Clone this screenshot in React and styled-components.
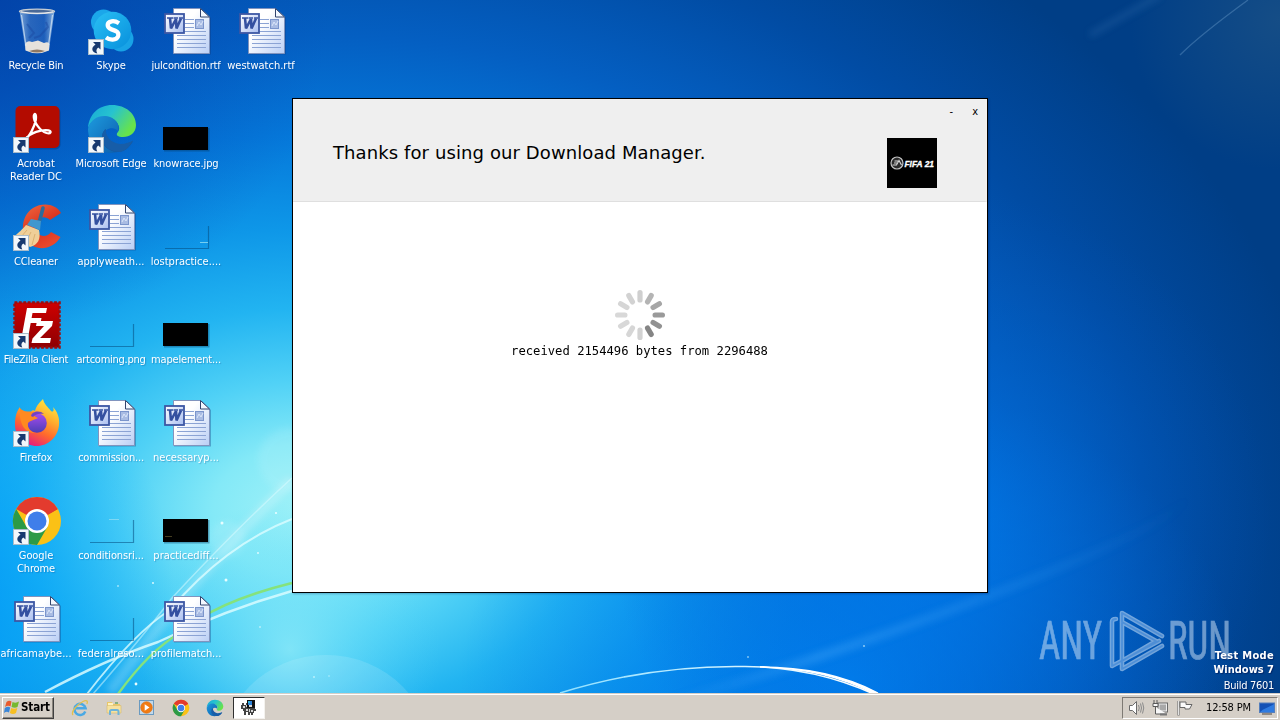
import React from "react";
import styled, { createGlobalStyle } from "styled-components";

const ui = `"DejaVu Sans Condensed", "DejaVu Sans", "Liberation Sans", sans-serif`;

const GlobalStyle = createGlobalStyle`
  * { box-sizing: border-box; }
  body { margin: 0; overflow: hidden; }
`;

const Screen = styled.div`
  position: relative;
  width: 1280px;
  height: 720px;
  overflow: hidden;
  display: flex;
  flex-direction: column;
  font-family: ${ui};
  font-stretch: condensed;
`;

const WallpaperSvg = styled.svg`
  position: absolute;
  inset: 0;
  z-index: 0;
`;

const Desktop = styled.main`
  position: relative;
  z-index: 1;
  flex: 1;
`;

const IconGrid = styled.div`
  display: grid;
  grid-auto-flow: column;
  grid-template-rows: repeat(7, 98px);
  grid-auto-columns: 75px;
  width: max-content;
  margin-left: -1px;
  padding-top: 7px;
`;

const Shortcut = styled.div`
  display: flex;
  flex-direction: column;
  align-items: center;
  svg { margin-left: 1px; flex: none; overflow: visible; }
`;

const Label = styled.span`
  margin-top: 4px;
  margin-left: -1px;
  width: 78px;
  text-align: center;
  white-space: pre;
  color: #fff;
  font-size: 11px;
  line-height: 13px;
  letter-spacing: ${(p) => p.$spacing ?? 0}px;
  text-shadow: 1px 1px 1px rgba(0, 60, 130, 0.3);
`;

const Window = styled.section`
  position: absolute;
  left: 292px;
  top: 98px;
  width: 696px;
  height: 495px;
  border: 1px solid #000;
  background: #fff;
  display: flex;
  flex-direction: column;
  box-shadow: 1px 1px 2px rgba(0, 0, 60, 0.25);
`;

const WindowHeader = styled.header`
  height: 103px;
  background: #efefef;
  border-bottom: 1px solid #dfdfdf;
  border-right: 2px solid #f3f0ed;
  display: flex;
  flex-direction: column;
`;

const Controls = styled.div`
  display: flex;
  justify-content: flex-end;
  gap: 19px;
  height: 27px;
  padding: 6px 7px 0 0;
  font-size: 11px;
  line-height: 13px;
  color: #000;
`;

const HeaderRow = styled.div`
  display: flex;
  justify-content: space-between;
  padding: 12px 48px 0 40px;
`;

const Title = styled.h1`
  margin: 3px 0 0;
  font: 400 18px/24px "DejaVu Sans", Verdana, sans-serif;
  font-stretch: normal;
  letter-spacing: 0.1px;
  color: #000;
  white-space: nowrap;
`;

const WindowBody = styled.div`
  flex: 1;
  display: flex;
  flex-direction: column;
  align-items: center;
  padding-top: 88px;
`;

const Status = styled.p`
  margin: 3px 1px 0 0;
  font: 12.2px/16px "DejaVu Sans Mono", monospace;
  color: #000;
  white-space: nowrap;
`;

const WatermarkSvg = styled.svg`
  position: absolute;
  left: 1034px;
  top: 606px;
`;

const BuildInfo = styled.div`
  position: absolute;
  right: 6px;
  bottom: 0;
  text-align: right;
  color: #fff;
  font-size: 11px;
  line-height: 14px;
  text-shadow: 1px 1px 1px rgba(0, 20, 80, 0.6);
  p { margin: 0; }
`;

const Strong = styled.p`
  font-weight: 700;
  letter-spacing: ${(p) => p.$spacing ?? 0}px;
`;

const Build = styled.p`
  padding-top: 2px;
  letter-spacing: -0.3px;
`;

const Taskbar = styled.footer`
  position: relative;
  z-index: 1;
  height: 28px;
  background: #d5cfc7;
  border-top: 1px solid #d5cfc7;
  box-shadow: inset 0 1px #fff;
  display: flex;
  align-items: flex-start;
  padding: 3px 2px 0;
`;

const StartButton = styled.div`
  width: 52px;
  height: 22px;
  display: flex;
  align-items: center;
  gap: 1px;
  padding-left: 1px;
  padding-bottom: 2px;
  border: 1px solid;
  border-color: #fff #404040 #404040 #fff;
  box-shadow: inset -1px -1px #8a857d;
  font: 700 11.5px/18px ${ui};
  font-stretch: condensed;
  letter-spacing: -0.1px;
  color: #000;
`;

const QuickLaunch = styled.nav`
  display: flex;
  align-items: center;
  gap: 15.7px;
  height: 22px;
  margin-left: 17px;
  svg { display: block; }
`;

const ActiveTask = styled.div`
  width: 32px;
  height: 22px;
  margin-left: 9px;
  display: flex;
  align-items: center;
  justify-content: center;
  background: #fff;
  border: 1px solid;
  border-color: #303030 #f4f2ee #f4f2ee #303030;
`;

const Tray = styled.div`
  margin-left: auto;
  width: 156px;
  height: 22px;
  display: flex;
  align-items: center;
  padding: 0 0 1px 5px;
  border: 1px solid;
  border-color: #7e7a74 #fff #fff #7e7a74;
  svg { display: block; flex: none; }
`;

const TrayIcons = styled.div`
  display: flex;
  gap: 6px;
  width: 78px;
`;

const Clock = styled.time`
  width: 53px;
  font-size: 11px;
  letter-spacing: -0.15px;
  white-space: nowrap;
  color: #000;
`;

/* ---------- wallpaper ---------- */

const Wallpaper = () => (
  <WallpaperSvg width="1280" height="720" viewBox="0 0 1280 720">
    <defs>
      <radialGradient id="sky" gradientUnits="userSpaceOnUse" cx="0" cy="0" r="720" gradientTransform="translate(305 510) scale(1.42 1)">
        <stop offset="0" stopColor="#a0f2f8" />
        <stop offset=".09" stopColor="#84e9f7" />
        <stop offset=".18" stopColor="#50d1f6" />
        <stop offset=".28" stopColor="#22b4f1" />
        <stop offset=".39" stopColor="#0e97e8" />
        <stop offset=".52" stopColor="#0578da" />
        <stop offset=".66" stopColor="#045fc2" />
        <stop offset=".82" stopColor="#014ca4" />
        <stop offset="1" stopColor="#003e86" />
      </radialGradient>
      <radialGradient id="low" gradientUnits="userSpaceOnUse" cx="0" cy="0" r="300" gradientTransform="translate(850 680) scale(1.3 1)">
        <stop offset="0" stopColor="#008cff" stopOpacity=".8" />
        <stop offset="1" stopColor="#0078f0" stopOpacity="0" />
      </radialGradient>
      <radialGradient id="right" gradientUnits="userSpaceOnUse" cx="0" cy="0" r="330" gradientTransform="translate(940 520)">
        <stop offset="0" stopColor="#007cee" stopOpacity=".7" />
        <stop offset=".5" stopColor="#0068d6" stopOpacity=".4" />
        <stop offset="1" stopColor="#0058c0" stopOpacity="0" />
      </radialGradient>
      <radialGradient id="left" gradientUnits="userSpaceOnUse" cx="0" cy="0" r="260" gradientTransform="translate(-60 590) scale(.9 1)">
        <stop offset="0" stopColor="#0094f8" stopOpacity=".8" />
        <stop offset=".35" stopColor="#00a0fa" stopOpacity=".6" />
        <stop offset="1" stopColor="#00a8fa" stopOpacity="0" />
      </radialGradient>
      <radialGradient id="teal" gradientUnits="userSpaceOnUse" cx="290" cy="650" r="150">
        <stop offset="0" stopColor="#96eef8" stopOpacity=".7" />
        <stop offset="1" stopColor="#48d4fa" stopOpacity="0" />
      </radialGradient>
      <radialGradient id="corner" gradientUnits="userSpaceOnUse" cx="0" cy="0" r="330">
        <stop offset="0" stopColor="#023fa8" stopOpacity=".75" />
        <stop offset="1" stopColor="#0348b4" stopOpacity="0" />
      </radialGradient>
      <radialGradient id="haze" gradientUnits="userSpaceOnUse" cx="1280" cy="20" r="150">
        <stop offset="0" stopColor="#2a5c86" stopOpacity=".5" />
        <stop offset="1" stopColor="#2a5c86" stopOpacity="0" />
      </radialGradient>
      <linearGradient id="arc" gradientUnits="userSpaceOnUse" x1="560" y1="0" x2="880" y2="0">
        <stop offset="0" stopColor="#8fe0ff" />
        <stop offset=".6" stopColor="#d8f4ff" />
        <stop offset="1" stopColor="#fff" />
      </linearGradient>
      <linearGradient id="beam" gradientUnits="userSpaceOnUse" x1="660" y1="0" x2="1190" y2="0">
        <stop offset="0" stopColor="#5ab6ff" stopOpacity="0" />
        <stop offset=".3" stopColor="#5ab6ff" stopOpacity=".3" />
        <stop offset="1" stopColor="#5ab6ff" stopOpacity="0" />
      </linearGradient>
      <filter id="soft1" x="-10%" y="-10%" width="120%" height="120%"><feGaussianBlur stdDeviation=".7" /></filter>
      <filter id="soft4" x="-20%" y="-20%" width="140%" height="140%"><feGaussianBlur stdDeviation="3.500" /></filter>
    </defs>
    <rect width="1280" height="720" fill="url(#sky)" />
    <rect width="1280" height="720" fill="url(#low)" />
    <rect width="1280" height="720" fill="url(#right)" />
    <rect width="1280" height="720" fill="url(#left)" />
    <rect width="1280" height="720" fill="url(#teal)" />
    <rect width="400" height="400" fill="url(#corner)" />
    <rect x="1100" width="180" height="200" fill="url(#haze)" />
    <g fill="#fff">
      <circle cx="326" cy="764" r="109" opacity=".12" filter="url(#soft1)" />
      <circle cx="227" cy="539" r="18" opacity=".12" filter="url(#soft4)" />
      <circle cx="290" cy="460" r="32" opacity=".1" filter="url(#soft4)" />
    </g>
    <g fill="none" filter="url(#soft4)">
      <path d="M650 707Q800 668 988 596T1190 495" stroke="url(#beam)" strokeWidth="9" />
      <path d="M1090 35L1160 -5" stroke="#5f9ad0" strokeWidth="6" opacity=".18" />
      <path d="M110 692Q190 580 292 480" stroke="#fff" strokeWidth="10" opacity=".22" />
    </g>
    <path d="M1180 55Q1200 35 1248 0" fill="none" stroke="#7aaad6" strokeWidth="1.400" opacity=".35" filter="url(#soft1)" />
    <g fill="none" filter="url(#soft1)">
      <path d="M45 692Q105 660 158 642Q225 610 292 591" stroke="#d8fbff" strokeWidth="2.400" opacity=".85" />
      <path d="M87 694Q135 632 170 610Q225 545 292 519" stroke="#dcfcff" strokeWidth="1.900" opacity=".8" />
      <path d="M93 694Q140 640 172 598Q235 530 292 478" stroke="#dcfcff" strokeWidth="1.600" opacity=".5" />
      <path d="M118 694Q150 650 180 633Q215 602 292 583" stroke="#85e27c" strokeWidth="2.400" />
      <path d="M560 693Q650 665 745 666.500Q815 667 876 695" stroke="url(#arc)" strokeWidth="1.500" />
      <path d="M760 667Q825 668 873 693L878 693Q828 667 760 667Z" fill="#fff" stroke="#fff" strokeWidth="1.400" />
    </g>
    <g fill="#e8fdff">
      <circle cx="222" cy="523" r="1.500" /><circle cx="276" cy="513" r="1.100" /><circle cx="258" cy="553" r=".9" />
      <circle cx="226" cy="580" r="1.500" /><circle cx="153" cy="583" r=".9" /><circle cx="118" cy="586" r=".8" />
      <circle cx="136" cy="684" r="1.400" /><circle cx="260" cy="627" r=".8" /><circle cx="314" cy="677" r="1" opacity=".6" />
      <circle cx="329" cy="676" r=".8" opacity=".6" /><circle cx="748" cy="657" r=".9" opacity=".6" /><circle cx="864" cy="646" r="1" opacity=".6" />
    </g>
  </WallpaperSvg>
);

/* ---------- desktop icons, 48x48 ---------- */

const Icon48 = ({ children }) => <svg width="48" height="48" viewBox="0 0 48 48">{children}</svg>;

const Arrow = () => (
  <g>
    <rect x=".5" y="32.500" width="15" height="15" fill="#f2f7fb" stroke="#a9bccb" strokeWidth="1" />
    <path d="M5 35H12.500V42.500L10.300 40.400C8 42 8 44 9.300 46.500C4.200 45.500 2 41 7.500 37.400Z" fill="#17396f" />
  </g>
);

const RecycleIcon = () => (
  <Icon48>
    <defs>
      <linearGradient id="bin" x1="0" x2="1"><stop offset="0" stopColor="#b5d2ee" stopOpacity=".7" /><stop offset=".3" stopColor="#4a80c8" stopOpacity=".55" /><stop offset=".7" stopColor="#3470c4" stopOpacity=".55" /><stop offset="1" stopColor="#b9d7f0" stopOpacity=".8" /></linearGradient>
    </defs>
    <path d="M6.500 4L12.500 43Q24 49 36 43L41.500 4Z" fill="url(#bin)" />
    <path d="M12 37Q14 33 19 35L25 33.500L31 36Q35.500 34 36.500 37L36 43.500Q24 49 12.500 43.500Z" fill="#e6e2dc" />
    <path d="M16 44Q24 41 32 44Q24 47 16 44Z" fill="#8e7864" />
    <path d="M14 17L21 26L16 31M33 15L35 20L27 29L21 31" stroke="#1a48a0" strokeWidth="2" fill="none" opacity=".45" />
    <path d="M8.500 8L13 39M39.500 8L35.500 38" stroke="#dcebf8" strokeWidth="1.200" opacity=".7" />
    <ellipse cx="24" cy="4.300" rx="17.500" ry="2.200" fill="#4a6a98" stroke="#c5ccd3" strokeWidth="1.400" />
    <path d="M8 4.800Q24 8 40 4.800" stroke="#eef0f2" fill="none" />
  </Icon48>
);

const SkypeIcon = () => (
  <Icon48>
    <defs><linearGradient id="sk" x1="0" x2="1" y2="1"><stop stopColor="#2ac0f4" /><stop offset="1" stopColor="#078fdc" /></linearGradient></defs>
    <circle cx="15.500" cy="15" r="12.500" fill="#1ba7ea" />
    <circle cx="33" cy="32" r="12.500" fill="#18a3e6" />
    <circle cx="24.500" cy="23.500" r="18.800" fill="url(#sk)" />
    <path d="M31 16.200Q27 13.600 23.600 14.300C18.300 15.300 18.500 20.700 23.500 22.400C28.500 24 31.500 25 30 29.500C28.500 33.500 21.500 33.200 18 30.600" fill="none" stroke="#fff" strokeWidth="4.300" />
    <Arrow />
  </Icon48>
);

const WordIcon = () => (
  <Icon48>
    <defs>
      <linearGradient id="pg" x1="0" y1="0" x2="1" y2="1"><stop offset=".35" stopColor="#fff" /><stop offset="1" stopColor="#b9cef5" /></linearGradient>
      <linearGradient id="wb" x1="0" y1="0" x2="1" y2="1"><stop stopColor="#fff" /><stop offset="1" stopColor="#a9bef0" /></linearGradient>
    </defs>
    <path d="M11 2H39L48 11V47.500H11Z" fill="#123a7b" opacity=".35" />
    <path d="M10.500 1.500H37.500L46.500 10V46.500H10.500Z" fill="url(#pg)" stroke="#8194be" />
    <path d="M37.500 1.500V10H46.500Z" fill="#f3f8ff" stroke="#33446c" />
    <path d="M22 12.500H31M22 16.500H31M22 20.500H31M14 24.500H43M14 28.500H43M14 32.500H43M14 36.500H43M14 40.500H43" stroke="#8ba3d4" />
    <rect x="32.500" y="12.500" width="8" height="9" fill="#a9bce3" stroke="#7b95cc" />
    <path d="M34 19L36 15L38 18L40 14" stroke="#dbe6fa" fill="none" />
    <rect x="2" y="7" width="19" height="19" fill="url(#wb)" stroke="#3c57a4" strokeWidth="1.800" />
    <path d="M4 11H10M10.500 11H15M16 11H20" stroke="#3450a0" strokeWidth="1.500" />
    <path d="M7 11L8 21.500L13 12L13.500 21.500L18 11.500" fill="none" stroke="#3450a0" strokeWidth="2.600" strokeLinejoin="bevel" />
  </Icon48>
);

const AcrobatIcon = () => (
  <Icon48>
    <rect x="3.500" y="2.500" width="44" height="42" rx="5" fill="#002a60" opacity=".35" />
    <rect x="2.500" y="1" width="44" height="42" rx="5" fill="#b30b00" />
    <path d="M12 34.500C17 31.500 21.500 21 22.800 15C23.700 8.500 21.300 7.500 20.800 11C20.400 16.500 27 26 33.500 28C38 29.200 39 26 35.500 25.300C29 24.300 17 27.500 12 34.500Z" fill="none" stroke="#fff" strokeWidth="2.300" />
    <Arrow />
  </Icon48>
);

const EdgeShape = ({ id }) => (
  <g>
    <defs>
      <linearGradient id={id + "a"} x1="0" y1="0" x2="1" y2=".5"><stop stopColor="#16a8d8" /><stop offset=".5" stopColor="#27c3cf" /><stop offset="1" stopColor="#67e34c" /></linearGradient>
      <linearGradient id={id + "b"} x1="0" y1="0" x2="1" y2="1"><stop stopColor="#1d9ade" /><stop offset="1" stopColor="#0c5dac" /></linearGradient>
    </defs>
    <path d="M0 23C1 9 11 0 24 0C38 0 48 9 48 20C48 28 42 32 35 32C30 32 27 30 30 27C33 23 30 17 25 14C16 10 4 13 0 23Z" fill={`url(#${id}a)`} />
    <path d="M0 24C2 15 9 11 16 11C26 11 33 19 30 26C26 21 16 23 15 31C14 39 21 46 31 46.500C15 52 0 41 0 24Z" fill={`url(#${id}b)`} />
    <path d="M18 24C13 33 20 43 31 42C37 41.500 42 38 45 36C42 42 37 46 31 47C20 47 13 40 14 31C14.500 28 16 25 18 24Z" fill="#15589f" />
    <path d="M18 24C17 30 22 38 32 39C38 39 42 37 45 35.500C41 43 36 47 31 47C20 46 13 40 14 31C14.500 28 16 25 18 24Z" fill="#175da8" />
  </g>
);

const EdgeIcon = () => <Icon48><EdgeShape id="ed" /><Arrow /></Icon48>;

const CCleanerIcon = () => (
  <Icon48>
    <defs><linearGradient id="cc" x1="0" y1="0" x2=".5" y2="1"><stop stopColor="#f06a40" /><stop offset=".6" stopColor="#d8301e" /><stop offset="1" stopColor="#e8472b" /></linearGradient></defs>
    <path d="M48 10C43 1 30 -1 20 5C6 14 7 36 20 43C29 48 42 44 47.500 34L38 29C34 35 25 34 22.500 27C20 17 30 10 37 17Z" fill="url(#cc)" />
    <path d="M30 5L26 20" stroke="#2c6c9c" strokeWidth="3.600" strokeLinecap="round" />
    <path d="M18 16L28 18L27 27L14 22Z" fill="#3f97cf" />
    <path d="M13 22L26 27C28 36 25 42 17 44L2 33C6 29 9 27 13 22Z" fill="#f0cf98" />
    <path d="M14 27L8 34M18 29L13 39M22 31L19 42" stroke="#d9ad6c" strokeWidth=".9" />
    <Arrow />
  </Icon48>
);

const FileZillaIcon = () => (
  <Icon48>
    <defs><linearGradient id="fz" x2="0" y2="1"><stop stopColor="#cf0000" /><stop offset="1" stopColor="#8d0003" /></linearGradient></defs>
    <rect x="1.500" y="1.500" width="45" height="45" fill="url(#fz)" stroke="#9d0b0d" strokeWidth="2.500" strokeDasharray="2.800 1.600" />
    <path d="M14 7H34L33 12H19.500L18.600 17H28.500L27.500 22H17.700L15.500 34H9Z" fill="#fff" />
    <path d="M24 20H40L39 25L27 37H38L37 42H18.500L19.500 37.500L31 25H23Z" fill="#fff" />
    <Arrow />
  </Icon48>
);

const FirefoxIcon = () => (
  <Icon48>
    <defs>
      <linearGradient id="ff" x1=".8" y1="0" x2=".3" y2="1"><stop stopColor="#fff044" /><stop offset=".35" stopColor="#ffb02e" /><stop offset=".65" stopColor="#ff6a2c" /><stop offset="1" stopColor="#e31587" /></linearGradient>
      <linearGradient id="fp" x2="0" y2="1"><stop stopColor="#a84bf0" /><stop offset="1" stopColor="#4b3fb5" /></linearGradient>
    </defs>
    <path d="M7 8C7 12 8 13 9 14C12 13 15 13 17 14C18 12 20 10 22 12C23 7 27 3 30 0C31 5 35 8 38 12C41 14 41 10 40 8C44 12 47 19 46 26C45 38 35 47 24 47C12 47 2 38 2 26C2 19 3 13 7 8Z" fill="url(#ff)" />
    <circle cx="24" cy="24" r="9.800" fill="url(#fp)" />
    <path d="M7 9C10 14 19 12 22 13C20 15 20 17 25 19C21 21 18 21 15 24C14 28 17 33 22 34C11 34 6 24 7 9Z" fill="#ff8a20" />
    <path d="M18 17C19 12 27 11 31 15C25 14 22 16 20 18Z" fill="#7143c4" />
    <Arrow />
  </Icon48>
);

const ChromeShape = () => (
  <g>
    <circle cx="24" cy="24" r="24" fill="#fbc116" />
    <path d="M24 24L3.200 12A24 24 0 0 1 44.800 12Z" fill="#e33b2e" />
    <path d="M24 12H44.800L24 24Z" fill="#e33b2e" />
    <path d="M3.200 12A24 24 0 0 0 24 48L34.400 30L24 24L13.600 30Z" fill="#2c9a47" />
    <circle cx="24" cy="24" r="12" fill="#fff" />
    <circle cx="24" cy="24" r="9.500" fill="#3f7eea" />
  </g>
);

const ChromeIcon = () => <Icon48><ChromeShape /><Arrow /></Icon48>;

const ThumbIcon = ({ dark, mark }) => (
  <Icon48>
    {dark ? (
      <g><rect x="1" y="23" width="45.500" height="23.500" fill="#063b66" opacity=".4" /><rect y="22" width="45" height="23" fill="#000" /></g>
    ) : (
      <path d="M2 45.500H45.500V23" fill="none" stroke="#064d80" strokeWidth="1.200" opacity=".55" />
    )}
    {mark && <path d={mark} stroke={dark ? "#554c28" : "#8edcf2"} strokeWidth="1" fill="none" opacity=".8" />}
  </Icon48>
);

const items = [
  ["Recycle Bin", <RecycleIcon />, -0.2],
  ["Acrobat\nReader DC", <AcrobatIcon />, -0.1],
  ["CCleaner", <CCleanerIcon />, -0.15],
  ["FileZilla Client", <FileZillaIcon />, -0.32],
  ["Firefox", <FirefoxIcon />],
  ["Google\nChrome", <ChromeIcon />, -0.1],
  ["africamaybe...", <WordIcon />],
  ["Skype", <SkypeIcon />, -0.1],
  ["Microsoft Edge", <EdgeIcon />, -0.15],
  ["applyweath...", <WordIcon />],
  ["artcoming.png", <ThumbIcon />, -0.25],
  ["commission...", <WordIcon />, -0.2],
  ["conditionsri...", <ThumbIcon mark="M21 22.500H31" />, -0.1],
  ["federalreso...", <ThumbIcon />, 0.1],
  ["julcondition.rtf", <WordIcon />, -0.18],
  ["knowrace.jpg", <ThumbIcon dark />, -0.1],
  ["lostpractice....", <ThumbIcon mark="M37 39.500H45" />],
  ["mapelement...", <ThumbIcon dark />, -0.18],
  ["necessaryp...", <WordIcon />],
  ["practicediff...", <ThumbIcon dark mark="M2 39.500H9" />],
  ["profilematch...", <WordIcon />, -0.1],
  ["westwatch.rtf", <WordIcon />],
];

/* ---------- window artwork ---------- */

const FifaLogo = () => (
  <svg width="50" height="50" viewBox="0 0 50 50">
    <rect width="50" height="50" fill="#000" />
    <circle cx="10" cy="25" r="6" fill="#2c2c2c" stroke="#c4c4c4" strokeWidth="1.200" />
    <path d="M5.500 27H9.500L12 22.500L14.500 27M7 25H10M7.500 23H11" stroke="#d8d8d8" strokeWidth="1.100" fill="none" />
    <text x="17.500" y="28.500" textLength="29.500" lengthAdjust="spacingAndGlyphs" fontFamily="Liberation Sans, sans-serif" fontWeight="700" fontStyle="italic" fontSize="9.500" fill="#fff" stroke="#fff" strokeWidth=".35">FIFA 21</text>
  </svg>
);

const spokes = ["#cfcfcf", "#b4b4b4", "#a6a6a6", "#9a9a9a", "#929292", "#858585", "#d2d2d2", "#d6d6d6", "#d8d8d8", "#d8d8d8", "#d6d6d6", "#d2d2d2"];

const Spinner = () => (
  <svg width="50" height="50" viewBox="0 0 50 50">
    {spokes.map((c, i) => (
      <rect key={i} x="22.400" y="0" width="5.200" height="12.500" rx="2.600" fill={c} transform={`rotate(${i * 30} 25 25)`} />
    ))}
  </svg>
);

const Watermark = () => (
  <WatermarkSvg width="202" height="72" viewBox="1034 606 202 72">
    <g opacity=".52" fill="#cfe2f6" stroke="#cfe2f6" strokeWidth=".7" fontFamily="Roboto, Liberation Sans, sans-serif" fontWeight="400" fontSize="53">
      <text x="1039" y="659" textLength="63" lengthAdjust="spacingAndGlyphs">ANY</text>
      <text x="1168" y="659" textLength="63" lengthAdjust="spacingAndGlyphs">RUN</text>
    </g>
    <g fill="none" strokeLinejoin="round" strokeLinecap="round" opacity=".62">
      <path d="M1116 619Q1112 619 1112 622V666L1159 641M1122 640V613L1162 636M1122 622L1156 641L1122 661V640M1122 662V669L1162 646" stroke="#b9d5f2" strokeWidth="4.600" />
      <path d="M1116 619Q1112 619 1112 622V666L1159 641M1122 640V613L1162 636M1122 622L1156 641L1122 661V640M1122 662V669L1162 646" stroke="#7fb2ea" strokeWidth="1.800" />
    </g>
  </WatermarkSvg>
);

/* ---------- taskbar icons ---------- */

const StartFlag = () => (
  <svg width="16" height="16" viewBox="0 0 16 16">
    <path d="M2.500 3Q5 1 7.500 2.500L6.500 7.500Q4 6 1 8Z" fill="#e85a2c" />
    <path d="M8.500 3Q12 4.500 15 2.500L13.500 8Q11 9.500 7.500 8Z" fill="#76b82e" />
    <path d="M.8 9Q4 7 6.200 8.500L5 13.500Q2.500 12 0 14Z" fill="#3a86d8" />
    <path d="M7.200 9Q10 10.500 13.300 9L12 14Q9 16 5.900 14Z" fill="#f7bf22" />
  </svg>
);

const IEIcon = () => (
  <svg width="18" height="18" viewBox="0 0 18 18">
    <path d="M14.300 12.500A5.600 5.600 0 1 1 14.600 9.300H5" fill="none" stroke="#4aa9e4" strokeWidth="2.500" />
    <path d="M2 16C-.5 13 6 5.500 12 2.500C15 1 17.500 1.500 15.800 5" fill="none" stroke="#e3c04c" strokeWidth="1.300" />
  </svg>
);

const ExplorerIcon = () => (
  <svg width="18" height="18" viewBox="0 0 18 18">
    <path d="M2 3H7L8 5H15V14H2Z" fill="#e9c767" />
    <path d="M3 4H8V12H3Z" fill="#fff2bd" />
    <path d="M2 6.500H16V14H2Z" fill="#f6e2a0" stroke="#d6bb6c" strokeWidth=".6" />
    <path d="M5 16V12.500Q5 11 6.500 11H12Q13.500 11 13.500 12.500V16" fill="none" stroke="#6fb4d8" strokeWidth="2" />
    <path d="M10 4H13" stroke="#4f9c52" strokeWidth="1.200" />
  </svg>
);

const MediaIcon = () => (
  <svg width="18" height="18" viewBox="0 0 18 18">
    <rect x="1.500" y="1.500" width="14" height="14" fill="#c3d9ea" stroke="#6a9ac0" />
    <circle cx="8.500" cy="8.500" r="5.800" fill="#f17b13" stroke="#d96a0b" strokeWidth=".6" />
    <path d="M6.700 5.200L11.500 8.500L6.700 11.800Z" fill="#fff" />
  </svg>
);

const InstallerIcon = () => (
  <svg width="18" height="18" viewBox="0 0 18 18" shapeRendering="crispEdges">
    <path d="M7 1H15V9H7Z" fill="#111" />
    <path d="M8 2H12V6H8Z" fill="#2b7fd6" />
    <path d="M8 2H10V4H8Z" fill="#35b8e0" />
    <path d="M2 4H4V6H6V4H7V9H15V10H16V12H14V14H13V16H11V14H10V16H8V13H6V16H4V12H3V10H1V6H2Z" fill="#444" />
    <path d="M3 7H5V9H3ZM6 6H7V8H6ZM6 10H8V12H6ZM9 10H10V13H9ZM11 11H13V13H11ZM9 6H12V8H9Z" fill="#d8d8d8" />
  </svg>
);

const SpeakerIcon = () => (
  <svg width="18" height="18" viewBox="0 0 18 18">
    <path d="M1.500 6.500H4.500L8.500 2.500V15.500L4.500 11.500H1.500Z" fill="#fff" stroke="#6b6b6b" />
    <path d="M10.500 6Q12 9 10.500 12M12.500 4.500Q14.500 9 12.500 13.500M14.500 3.500Q17 9 14.500 14.500" fill="none" stroke="#8a8a8a" />
  </svg>
);

const NetworkIcon = () => (
  <svg width="18" height="18" viewBox="0 0 18 18">
    <rect x="6" y="4" width="9.500" height="9" fill="#eee" stroke="#6a6a6a" />
    <rect x="7.500" y="5.500" width="6.500" height="6" fill="#a8a8a8" />
    <path d="M2 1V4M5 1V4M1 4.500H6V7.500H1ZM3.500 8V15H15" fill="#f8f8f8" stroke="#5a5a5a" />
    <path d="M8 15.500H15" stroke="#777" strokeWidth="2" />
  </svg>
);

const FlagIcon = () => (
  <svg width="18" height="18" viewBox="0 0 18 18">
    <path d="M2.500 2V16.500" stroke="#777" strokeWidth="2.200" />
    <path d="M2.500 2V16" stroke="#fff" strokeWidth=".8" />
    <path d="M4 3H10V5.500H16L13.500 10H9V8.500H4Z" fill="#fafafa" stroke="#666" />
  </svg>
);

const ShowDesktopIcon = () => (
  <svg width="16" height="16" viewBox="0 0 16 16">
    <rect x=".5" y="3" width="15" height="9.500" fill="#1451b5" stroke="#547ebc" />
    <path d="M1 12C5 8 11 7 15 4V12Z" fill="#2f7be0" />
    <path d="M3 14H13" stroke="#78716a" strokeWidth="1.500" />
  </svg>
);

export default function App() {
  return (
    <Screen>
      <GlobalStyle />
      <Wallpaper />
      <Desktop>
        <IconGrid>
          {items.map(([name, icon, spacing]) => (
            <Shortcut key={name}>
              {icon}
              <Label $spacing={spacing}>{name}</Label>
            </Shortcut>
          ))}
        </IconGrid>
        <Window>
          <WindowHeader>
            <Controls><span>-</span><span>x</span></Controls>
            <HeaderRow>
              <Title>Thanks for using our Download Manager.</Title>
              <FifaLogo />
            </HeaderRow>
          </WindowHeader>
          <WindowBody>
            <Spinner />
            <Status>received 2154496 bytes from 2296488</Status>
          </WindowBody>
        </Window>
        <Watermark />
        <BuildInfo>
          <Strong $spacing={0.3}>Test Mode</Strong>
          <Strong>Windows 7</Strong>
          <Build>Build 7601</Build>
        </BuildInfo>
      </Desktop>
      <Taskbar>
        <StartButton><StartFlag />Start</StartButton>
        <QuickLaunch>
          <IEIcon />
          <ExplorerIcon />
          <MediaIcon />
          <svg width="18" height="18" viewBox="-2 -2 52 52"><ChromeShape /></svg>
          <svg width="18" height="18" viewBox="-2 -2 52 52"><EdgeShape id="et" /></svg>
        </QuickLaunch>
        <ActiveTask><InstallerIcon /></ActiveTask>
        <Tray>
          <TrayIcons><SpeakerIcon /><NetworkIcon /><FlagIcon /></TrayIcons>
          <Clock>12:58 PM</Clock>
          <ShowDesktopIcon />
        </Tray>
      </Taskbar>
    </Screen>
  );
}
